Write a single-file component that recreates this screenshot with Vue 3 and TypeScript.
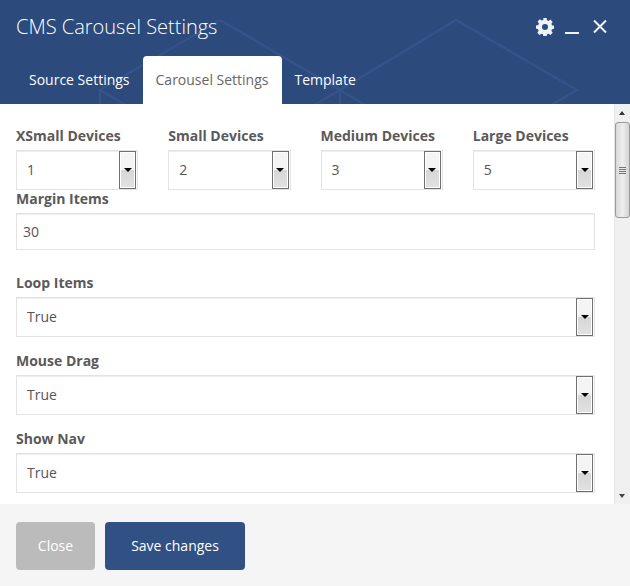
<script setup lang="ts">
const devices = [
  { label: 'XSmall Devices', value: '1' },
  { label: 'Small Devices', value: '2' },
  { label: 'Medium Devices', value: '3' },
  { label: 'Large Devices', value: '5' },
]
const rows = ['Loop Items', 'Mouse Drag', 'Show Nav']
</script>

<template>
  <div class="modal">
    <header class="head">
      <svg class="pattern" width="630" height="104" viewBox="0 0 630 104" fill="none" stroke="#35538a" stroke-width="2.4">
        <path d="M220 20 L340 90 L456 20 L577 90 L456 160" />
        <path d="M220 20 L100 90 L220 160" />
        <path d="M340 90 L220 160 M340 90 L456 160 M340 90 V110 M100 90 V110" />
      </svg>
      <div class="title-row">
        <h1 class="title">CMS Carousel Settings</h1>
        <div class="actions">
          <svg width="18" height="18" viewBox="0 0 18 18"><path fill="#eef1f6" fill-rule="evenodd" d="M7.400 0h3.200l.4 2.300 1.500.6 1.900-1.300 2.300 2.300-1.300 1.900.6 1.500 2.300.4v3.200l-2.300.4-.6 1.500 1.300 1.900-2.300 2.300-1.900-1.300-1.500.6-.4 2.300H7.400l-.4-2.300-1.500-.6-1.900 1.300-2.300-2.300 1.300-1.900-.6-1.500L0 10.600V7.400l2.300-.4.6-1.500-1.300-1.900 2.300-2.300 1.900 1.300 1.500-.6zM9 6a3 3 0 1 0 0 6 3 3 0 0 0 0-6z"/></svg>
          <svg width="14" height="18" viewBox="0 0 14 18"><rect x="0" y="14" width="14" height="2" fill="#eef1f6"/></svg>
          <svg class="x" width="14" height="18" viewBox="0 0 14 18"><path d="M1 2.500L13 14.500M13 2.500L1 14.500" stroke="#eef1f6" stroke-width="2" fill="none"/></svg>
        </div>
      </div>
      <nav class="tabs">
        <span class="tab">Source Settings</span>
        <span class="tab active">Carousel Settings</span>
        <span class="tab">Template</span>
      </nav>
    </header>

    <main class="body">
      <div class="content">
        <div class="devices">
          <div v-for="d in devices" :key="d.label" class="device">
            <label class="label">{{ d.label }}</label>
            <div class="select">
              <span class="value">{{ d.value }}</span>
              <span class="arrow"><i></i></span>
            </div>
          </div>
        </div>
        <label class="label margin-label">Margin Items</label>
        <div class="input">30</div>
        <div v-for="r in rows" :key="r" class="row">
          <label class="label">{{ r }}</label>
          <div class="select">
            <span class="value">True</span>
            <span class="arrow"><i></i></span>
          </div>
        </div>
      </div>
      <div class="scrollbar">
        <span class="sb-up"></span>
        <span class="sb-thumb"><b></b><b></b><b></b><b></b></span>
        <span class="sb-down"></span>
      </div>
    </main>

    <footer class="foot">
      <button class="btn close">Close</button>
      <button class="btn save">Save changes</button>
    </footer>
  </div>
</template>

<style scoped>
.modal {
  width: 630px;
  height: 586px;
  display: flex;
  flex-direction: column;
  font-family: "Open Sans", sans-serif;
  overflow: hidden;
}
.head {
  position: relative;
  height: 104px;
  flex: none;
  background: #2c4a7c;
  overflow: hidden;
}
.pattern {
  position: absolute;
  left: 0;
  top: 0;
}
.title-row {
  position: relative;
  height: 56px;
  display: flex;
  align-items: center;
  justify-content: space-between;
  padding: 0 23px 2px 16px;
  box-sizing: border-box;
}
.title {
  margin: 0;
  font-size: 20px;
  font-weight: 300;
  color: #fff;
  line-height: 28px;
}
.actions {
  display: flex;
  align-items: center;
  gap: 11px;
}
.x {
  margin-left: 3px;
}
.tabs {
  position: relative;
  display: flex;
  height: 48px;
  padding-left: 16px;
}
.tab {
  padding: 0 13px;
  font-size: 14px;
  line-height: 48px;
  color: #fff;
  border-radius: 4px 4px 0 0;
}
.tab.active {
  background: #fff;
  color: #666;
  padding-right: 14px;
  margin-right: -1px;
}
.body {
  flex: 1;
  min-height: 0;
  display: flex;
  background: #fff;
  overflow: hidden;
}
.content {
  flex: 1;
  padding: 22px 19px 0 16px;
  min-width: 0;
}
.devices {
  display: flex;
  gap: 30px;
}
.device {
  flex: 1;
  min-width: 0;
}
.label {
  display: block;
  font-size: 14px;
  font-weight: 700;
  color: #5a5a5a;
  line-height: 20px;
  margin-bottom: 4px;
}
.select {
  height: 40px;
  box-sizing: border-box;
  border: 1px solid #e3e3e3;
  box-shadow: inset 0 1px 1px rgba(0, 0, 0, 0.075);
  display: flex;
  align-items: center;
  justify-content: space-between;
  padding-right: 1px;
  background: #fff;
}
.value {
  padding: 0 0 2px 10px;
  font-size: 14px;
  color: #555;
}
.arrow {
  width: 17px;
  height: 38px;
  box-sizing: border-box;
  border: 1px solid #707070;
  box-shadow: inset 0 0 0 1px #fff;
  background: linear-gradient(#f4f4f4 0 50%, #d6d6d6 50%, #e2e2e2);
  display: flex;
  align-items: center;
  justify-content: center;
}
.arrow i {
  display: block;
  width: 0;
  height: 0;
  border-left: 4px solid transparent;
  border-right: 4px solid transparent;
  border-top: 4px solid #000;
}
.margin-label {
  margin-top: -1px;
  margin-bottom: 4px;
}
.input {
  height: 37px;
  box-sizing: border-box;
  border: 1px solid #e3e3e3;
  box-shadow: inset 0 1px 1px rgba(0, 0, 0, 0.075);
  font-size: 14px;
  color: #555;
  line-height: 35px;
  padding-left: 6px;
}
.input + .row {
  margin-top: 23px;
}
.row + .row {
  margin-top: 14px;
}
.scrollbar {
  position: relative;
  width: 16px;
  flex: none;
  background: #f0f0f0;
  border-left: 1px solid #e6e6e6;
  box-sizing: border-box;
}
.sb-up,
.sb-down {
  position: absolute;
  left: 4px;
  width: 0;
  height: 0;
  border-left: 3.5px solid transparent;
  border-right: 3.5px solid transparent;
}
.sb-up {
  top: 7px;
  border-bottom: 4px solid #333;
}
.sb-down {
  bottom: 6px;
  border-top: 4px solid #444;
}
.sb-thumb {
  position: absolute;
  left: 0;
  top: 18px;
  width: 15px;
  height: 96px;
  box-sizing: border-box;
  border: 1px solid #9a9a9a;
  border-radius: 3px;
  background: linear-gradient(90deg, #d8d8d8, #eeeeee 50%, #d4d4d4);
  display: flex;
  flex-direction: column;
  justify-content: center;
  align-items: center;
  gap: 1px;
}
.sb-thumb b {
  display: block;
  width: 7px;
  height: 1px;
  background: #777;
}
.foot {
  height: 82px;
  flex: none;
  background: #f5f5f5;
  display: flex;
  align-items: flex-start;
  gap: 10px;
  padding: 18px 16px 0;
  box-sizing: border-box;
}
.btn {
  height: 48px;
  border: 0;
  border-radius: 4px;
  font-family: inherit;
  font-size: 14px;
  color: #fff;
  padding: 0 0 2px;
}
.close {
  width: 79px;
  background: #bbb;
}
.save {
  width: 140px;
  background: #315083;
}
</style>
